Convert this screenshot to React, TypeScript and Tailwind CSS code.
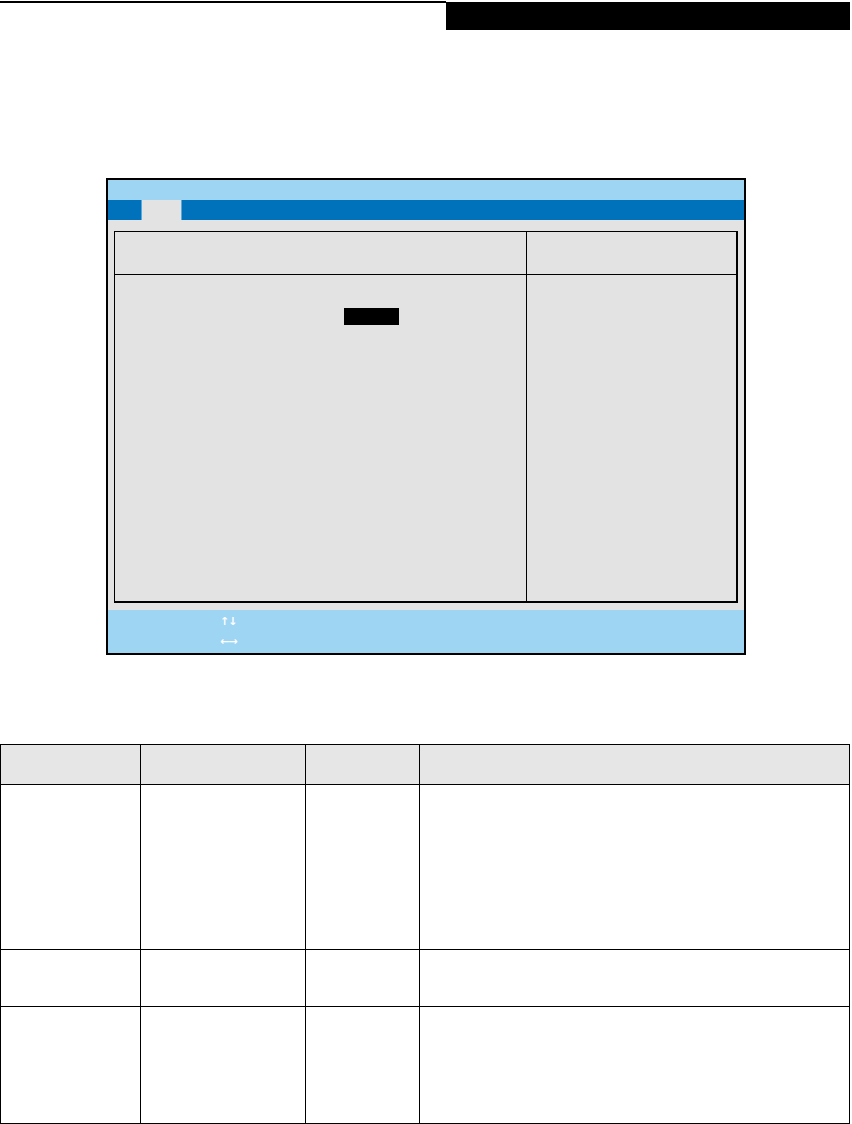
// BIOS setup screen illustration with an empty reference table beneath it.

const rows = [165, 57, 117];

export default function App() {
  return (
    <div className="h-[1124px] w-[852px] overflow-hidden bg-white font-['Liberation_Sans',sans-serif]">
      {/* running header: rule on the left, black tab on the right */}
      <div className="flex h-[30px]">
        <div className="mt-[1px] h-[2px] w-[446px] bg-black" />
        <div className="mr-[2px] mt-[2px] flex-1 bg-black" />
      </div>

      {/* BIOS window */}
      <div className="ml-[106px] mt-[148px] w-[640px] border-2 border-black">
        <div className="h-[20px] bg-[#9ed5f3]" />
        <div className="flex h-[20px] bg-[#0072bb]">
          <div className="ml-[33px] w-[41px] border-x border-[#5aa8dc] bg-[#e3e3e3]" />
        </div>
        <div className="bg-[#e3e3e3] px-[6px] pb-[7px] pt-[11px]">
          <div className="flex h-[372px] flex-col border-b-2 border-l border-r-2 border-t border-black">
            <div className="flex h-[43px] border-b border-black">
              <div className="w-[412px] border-r border-black" />
              <div className="flex-1" />
            </div>
            <div className="flex flex-1">
              <div className="w-[412px] border-r border-black pl-[229px] pt-[33px]">
                <div className="h-[17px] w-[55px] bg-black" />
              </div>
              <div className="flex-1" />
            </div>
          </div>
        </div>
        <div className="h-[43px] bg-[#9ed5f3] pl-[112px] pt-[2px] font-['DejaVu_Sans',sans-serif] text-[11px] font-bold leading-[20px] tracking-[-1px] text-white">
          <div>↑↓</div>
          <div>←→</div>
        </div>
      </div>

      {/* description table */}
      <table className="mt-[89px] w-[850px] table-fixed border-collapse">
        <thead>
          <tr className="h-[40px] bg-[#e6e6e6]">
            <th className="w-[140px] border border-black" />
            <th className="w-[165px] border border-black" />
            <th className="w-[114px] border border-black" />
            <th className="border border-black" />
          </tr>
        </thead>
        <tbody>
          {rows.map((h, i) => (
            <tr key={i} style={{ height: h }}>
              <td className="border border-black" />
              <td className="border border-black" />
              <td className="border border-black" />
              <td className="border border-black" />
            </tr>
          ))}
        </tbody>
      </table>
    </div>
  );
}
